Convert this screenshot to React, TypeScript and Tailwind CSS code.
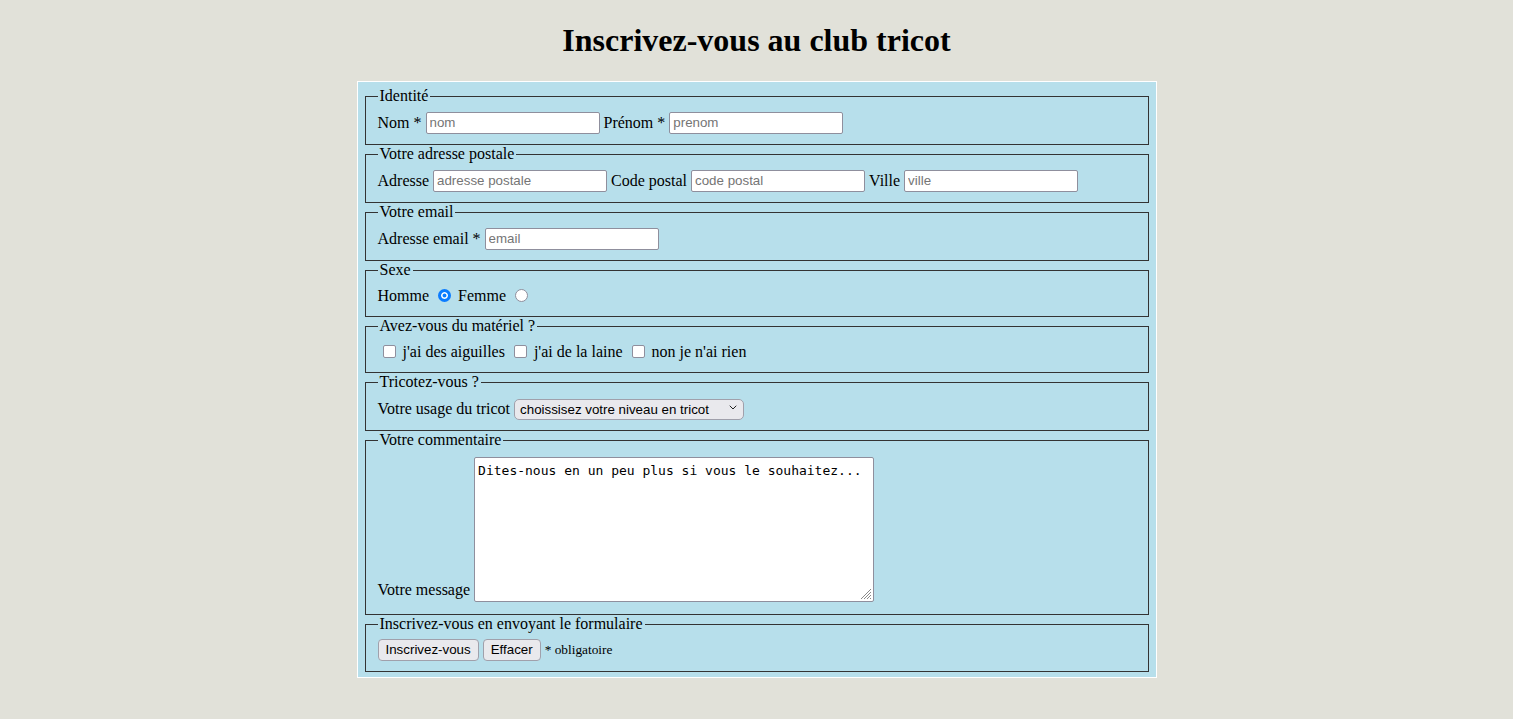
import type { ReactNode } from "react";

const serif = "font-['Liberation_Serif','Times_New_Roman',serif]";
const sans = "font-['Liberation_Sans',Arial,sans-serif]";

const inputCls = `${sans} h-[22px] w-[174px] rounded-[2px] border border-[#8f8f9d] bg-white px-[3px] text-[13.33px] text-black placeholder:text-[#757575] outline-none`;

const btnCls = `${sans} h-[22px] rounded-[4px] border border-[#a0a0ab] bg-[#e9e9ed] px-[7px] text-[13.33px] leading-none text-black`;

const radioCls =
  "mr-[3px] ml-[5px] h-[13px] w-[13px] appearance-none rounded-full border-[1.5px] border-[#8f8f9d] bg-white checked:border-[3px] checked:border-[#0a7cff] checked:bg-[#0a7cff] checked:shadow-[inset_0_0_0_1.5px_white]";

const checkCls =
  "mr-[3px] ml-[5px] h-[13px] w-[13px] appearance-none rounded-[2px] border-[1.5px] border-[#8f8f9d] bg-white checked:border-[#0a7cff] checked:bg-[#0a7cff]";

function Group({
  title,
  rowH,
  children,
  align = "items-center",
}: {
  title: string;
  rowH: string;
  children: ReactNode;
  align?: string;
}) {
  return (
    <fieldset className="mx-[2px] border border-[#333] px-3 pt-[6px] pb-[10px]">
      <legend className="h-[18px] px-[2px] leading-[18px]">{title}</legend>
      <div className={`flex gap-1 ${align} ${rowH}`}>{children}</div>
    </fieldset>
  );
}

export default function App() {
  return (
    <div
      className={`min-h-screen bg-[#e1e1d9] text-[16px] text-black ${serif}`}
    >
      <h1 className="pt-[22px] pb-[22px] text-center text-[32px] leading-[37px] font-bold">
        Inscrivez-vous au club tricot
      </h1>

      <form
        className="mx-auto w-[800px] border border-white bg-[#b7dfeb] p-[5px]"
        onSubmit={(e) => e.preventDefault()}
      >
        <Group title="Identité" rowH="h-[23px]">
          <label>Nom *</label>
          <input className={inputCls} placeholder="nom" />
          <label>Prénom *</label>
          <input className={inputCls} placeholder="prenom" />
        </Group>

        <Group title="Votre adresse postale" rowH="h-[23px]">
          <label>Adresse</label>
          <input className={inputCls} placeholder="adresse postale" />
          <label>Code postal</label>
          <input className={inputCls} placeholder="code postal" />
          <label>Ville</label>
          <input className={inputCls} placeholder="ville" />
        </Group>

        <Group title="Votre email" rowH="h-[23px]">
          <label>Adresse email *</label>
          <input className={inputCls} placeholder="email" />
        </Group>

        <Group title="Sexe" rowH="h-[21px]">
          <label>Homme</label>
          <input type="radio" name="sexe" defaultChecked className={radioCls} />
          <label>Femme</label>
          <input type="radio" name="sexe" className={radioCls} />
        </Group>

        <Group title="Avez-vous du matériel ?" rowH="h-[21px]">
          <input type="checkbox" className={checkCls} />
          <label>j'ai des aiguilles</label>
          <input type="checkbox" className={checkCls} />
          <label>j'ai de la laine</label>
          <input type="checkbox" className={checkCls} />
          <label>non je n'ai rien</label>
        </Group>

        <Group title="Tricotez-vous ?" rowH="h-[23px]">
          <label>Votre usage du tricot</label>
          <div className="relative">
            <select
              className={`${sans} h-[21px] w-[230px] appearance-none rounded-[5px] border border-[#a0a0ab] bg-[#e9e9ed] pl-[5px] text-[13.33px] text-black outline-none`}
              defaultValue=""
            >
              <option value="">choissisez votre niveau en tricot</option>
              <option value="debutant">débutant</option>
              <option value="confirme">confirmé</option>
              <option value="expert">expert</option>
            </select>
            <svg
              className="pointer-events-none absolute top-[8px] right-[7px]"
              width="8"
              height="5"
              viewBox="0 0 8 5"
            >
              <path
                d="M1 1l3 3 3-3"
                fill="none"
                stroke="#222"
                strokeWidth="1"
                strokeLinecap="round"
                strokeLinejoin="round"
              />
            </svg>
          </div>
        </Group>

        <Group title="Votre commentaire" rowH="h-[149px]" align="items-end">
          <label className="mb-[2px]">Votre message</label>
          <div className="relative mb-[2px]">
            <textarea
              className="block h-[145px] w-[400px] resize-none rounded-[2px] border border-[#8f8f9d] bg-white px-[3px] py-[5px] font-['DejaVu_Sans_Mono',monospace] text-[13px] leading-[15px] text-black outline-none"
              defaultValue="Dites-nous en un peu plus si vous le souhaitez..."
            />
            <svg
              className="pointer-events-none absolute right-[2px] bottom-[2px]"
              width="12"
              height="12"
              viewBox="0 0 12 12"
            >
              <path
                d="M11 1L1 11M11 4L4 11M11 7L7 11M11 10L10 11"
                stroke="#8a8a8a"
                strokeWidth="1"
              />
            </svg>
          </div>
        </Group>

        <Group title="Inscrivez-vous en envoyant le formulaire" rowH="h-[22px]">
          <button type="submit" className={btnCls}>
            Inscrivez-vous
          </button>
          <button type="reset" className={btnCls}>
            Effacer
          </button>
          <span className="text-[13.33px]">* obligatoire</span>
        </Group>
      </form>
    </div>
  );
}
